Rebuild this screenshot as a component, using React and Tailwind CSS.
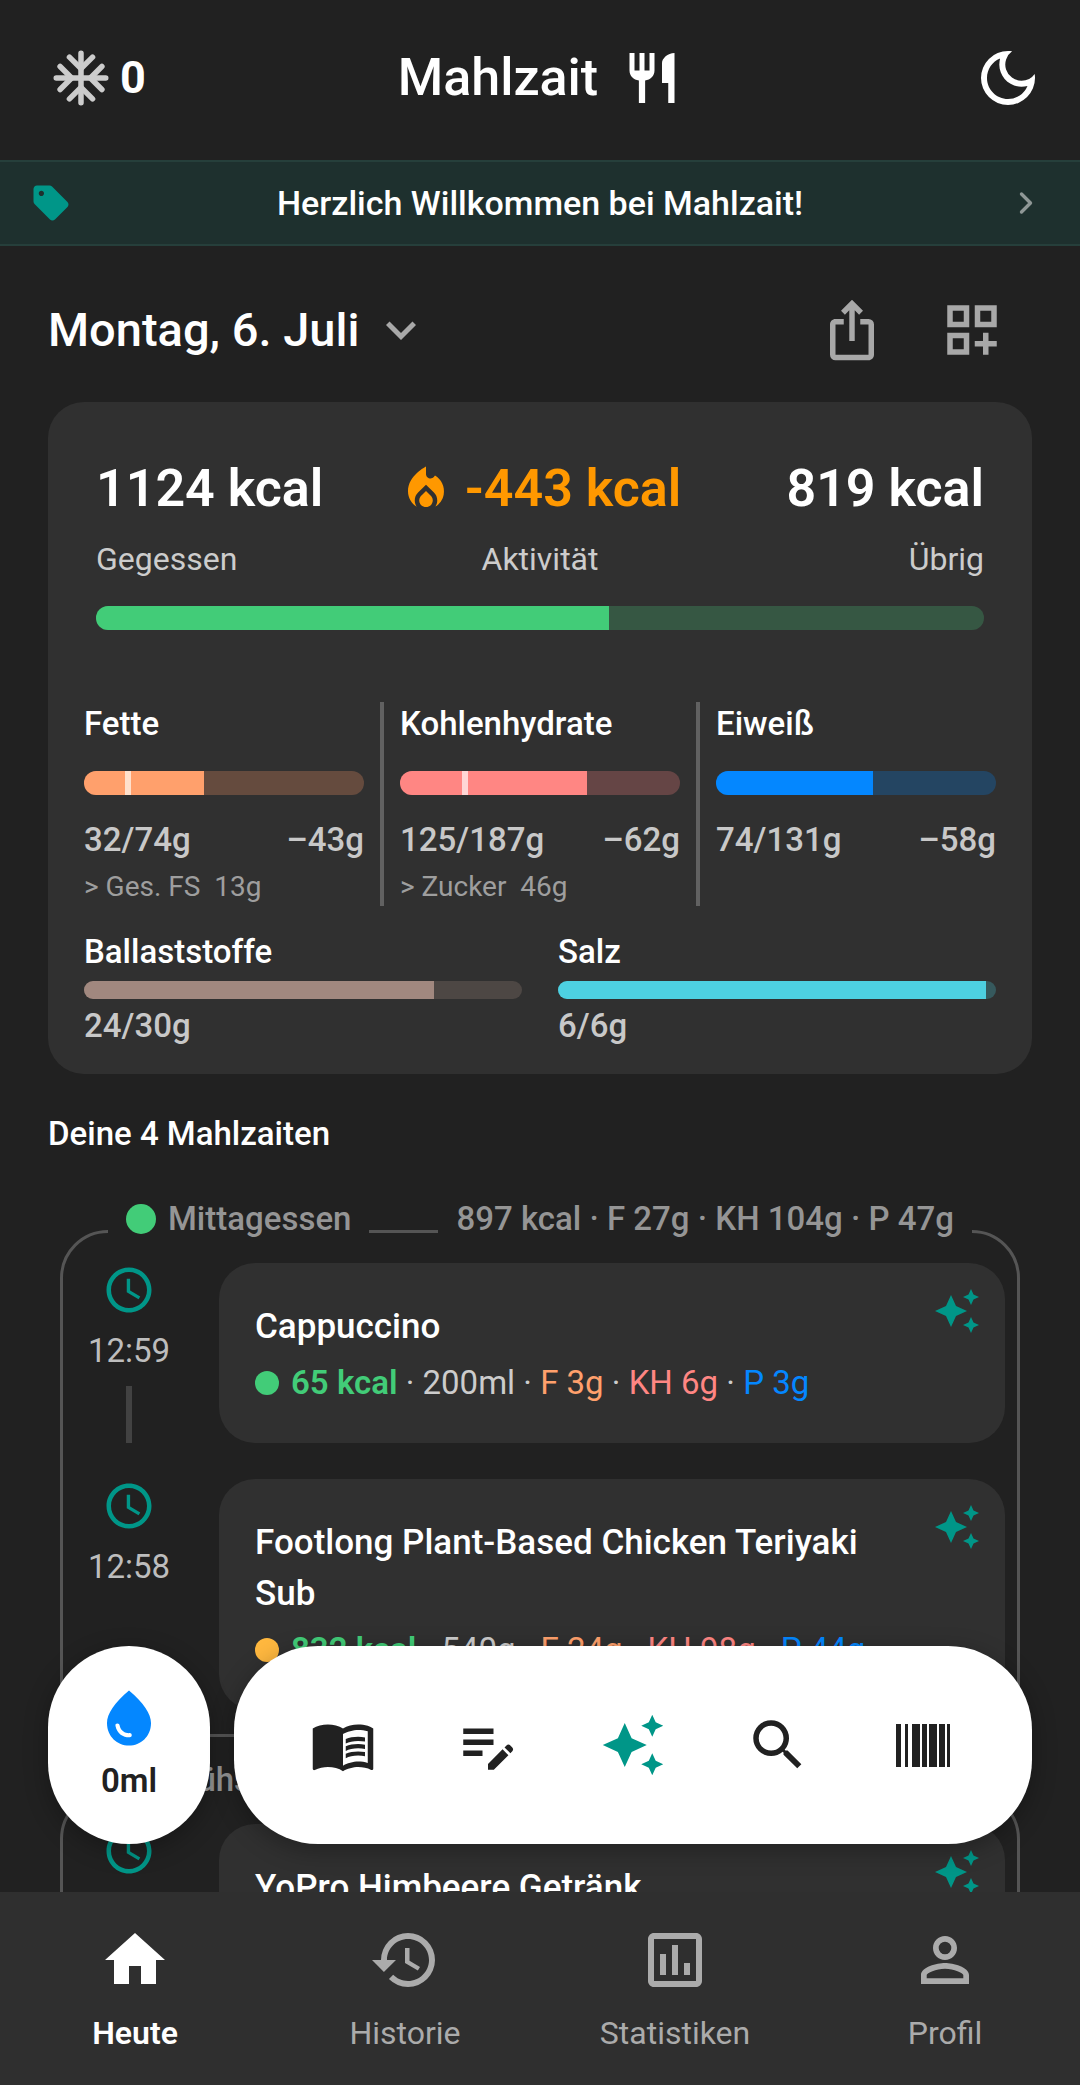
import { useState } from 'react';
import { ChevronRight } from 'lucide-react';
import {
  MdAccessTime,
  MdAutoAwesome,
  MdEditNote,
  MdHistory,
  MdHome,
  MdIosShare,
  MdKeyboardArrowDown,
  MdLocalFireDepartment,
  MdMenuBook,
  MdOutlineDarkMode,
  MdOutlineDashboardCustomize,
  MdOutlineInsertChart,
  MdPersonOutline,
  MdRestaurant,
  MdSearch,
  MdSell,
  MdWaterDrop,
} from 'react-icons/md';

const macros = [
  {
    name: 'Fette',
    value: '32/74g',
    rest: '–43g',
    sub: '> Ges. FS\u00a0 13g',
    percent: 42.7,
    marker: 14.6,
    fill: 'bg-[#ffa06c]',
    track: 'bg-[#654b3e]',
    markerColor: 'bg-[#ffe0cc]',
  },
  {
    name: 'Kohlenhydrate',
    value: '125/187g',
    rest: '–62g',
    sub: '> Zucker\u00a0 46g',
    percent: 66.7,
    marker: 22.3,
    fill: 'bg-[#ff8683]',
    track: 'bg-[#654545]',
    markerColor: 'bg-[#ffd6d5]',
  },
  {
    name: 'Eiweiß',
    value: '74/131g',
    rest: '–58g',
    percent: 56.1,
    fill: 'bg-[#0487ff]',
    track: 'bg-[#244562]',
  },
];

const minerals = [
  { name: 'Ballaststoffe', value: '24/30g', percent: 80, fill: 'bg-[#a1887f]', track: 'bg-[#4d4744]' },
  { name: 'Salz', value: '6/6g', percent: 97.7, fill: 'bg-[#4dd0e1]', track: 'bg-[#36595d]' },
];

const mealGroups = [
  {
    name: 'Mittagessen',
    total: '897 kcal · F 27g · KH 104g · P 47g',
    meals: [
      {
        name: 'Cappuccino',
        time: '12:59',
        dot: 'bg-[#42cc78]',
        kcal: '65 kcal',
        amount: '200ml',
        fat: 'F 3g',
        carbs: 'KH 6g',
        protein: 'P 3g',
      },
      {
        name: 'Footlong Plant-Based Chicken Teriyaki Sub',
        time: '12:58',
        dot: 'bg-[#ffb83f]',
        kcal: '832 kcal',
        amount: '540g',
        fat: 'F 24g',
        carbs: 'KH 98g',
        protein: 'P 44g',
      },
    ],
  },
  {
    name: 'Frühstück',
    meals: [{ name: 'YoPro Himbeere Getränk' }],
  },
];

const tabs = [
  { id: 'heute', label: 'Heute', Icon: MdHome },
  { id: 'historie', label: 'Historie', Icon: MdHistory },
  { id: 'statistiken', label: 'Statistiken', Icon: MdOutlineInsertChart },
  { id: 'profil', label: 'Profil', Icon: MdPersonOutline },
];

const SnowflakeIcon = () => (
  <svg
    viewBox="0 0 24 24"
    className="size-[66px]"
    fill="none"
    stroke="currentColor"
    strokeWidth="2"
    strokeLinecap="round"
    aria-hidden="true"
  >
    <path d="M12 3v18M3 12h18" />
    <path d="M7.8 4.4 12 8.6l4.2-4.2M7.8 19.6 12 15.4l4.2 4.2M4.4 7.8 8.6 12l-4.2 4.2M19.6 7.8 15.4 12l4.2 4.2" />
  </svg>
);

const BarcodeIcon = () => (
  <svg viewBox="0 0 54 43" className="h-[43px] w-[54px]" fill="currentColor" aria-hidden="true">
    <path d="M0 0h5v43H0zM9 0h3v43H9zM16 0h8v43h-8zM26 0h5v43h-5zM33 0h8v43h-8zM43 0h6v43h-6zM51 0h3v43h-3z" />
  </svg>
);

const ProgressBar = ({ percent, fill, track, height = 'h-6', marker, markerColor }) => (
  <div className={`relative overflow-hidden rounded-full ${height} ${track}`}>
    <div className={`h-full ${fill}`} style={{ width: `${percent}%` }} />
    {marker && (
      <div className={`absolute top-0 h-full w-1.5 ${markerColor}`} style={{ left: `${marker}%` }} />
    )}
  </div>
);

const SummaryCard = () => (
  <section className="mx-12 mt-3 rounded-[36px] bg-[#303030] px-9 pt-12 pb-[27px]">
    <div className="px-3">
      <div className="grid grid-cols-[1fr_auto_1fr]">
        <div>
          <p className="text-[52px] leading-[78px] font-semibold">1124 kcal</p>
          <p className="mt-1.5 text-[32px] leading-[50px] text-[#cccccc]">Gegessen</p>
        </div>
        <div className="text-center">
          <p className="flex items-center justify-center gap-3 text-[52px] leading-[78px] font-semibold text-[#ff9800]">
            <MdLocalFireDepartment className="size-[54px]" />
            -443 kcal
          </p>
          <p className="mt-1.5 text-[32px] leading-[50px] text-[#cccccc]">Aktivität</p>
        </div>
        <div className="text-right">
          <p className="text-[52px] leading-[78px] font-semibold">819 kcal</p>
          <p className="mt-1.5 text-[32px] leading-[50px] text-[#cccccc]">Übrig</p>
        </div>
      </div>
      <div className="mt-[22px]">
        <ProgressBar percent={57.8} fill="bg-[#42cc78]" track="bg-[#365743]" />
      </div>
    </div>

    <div className="mt-[72px] flex gap-4">
      {macros.map((macro, index) => (
        <div key={macro.name} className="contents">
          {index > 0 && <div className="w-1 bg-[#616161]" />}
          <div className="min-h-[204px] flex-1">
            <h3 className="text-[33px] leading-[44px] font-medium">{macro.name}</h3>
            <div className="mt-[25px]">
              <ProgressBar {...macro} />
            </div>
            <div className="mt-6 flex justify-between text-[33px] leading-[42px] font-medium text-[#c8c8c8]">
              <span>{macro.value}</span>
              <span>{macro.rest}</span>
            </div>
            {macro.sub && (
              <p className="mt-1.5 text-[28px] leading-[39px] text-[#9e9e9e]">{macro.sub}</p>
            )}
          </div>
        </div>
      ))}
    </div>

    <div className="mt-6 grid grid-cols-2 gap-9">
      {minerals.map((mineral) => (
        <div key={mineral.name}>
          <h3 className="text-[33px] leading-[44px] font-medium">{mineral.name}</h3>
          <div className="mt-[7px] mb-1.5">
            <ProgressBar {...mineral} height="h-[18px]" />
          </div>
          <p className="text-[33px] leading-[42px] font-medium text-[#c8c8c8]">{mineral.value}</p>
        </div>
      ))}
    </div>
  </section>
);

const MealRow = ({ meal, last }) => (
  <li className="flex gap-6">
    <div className="flex w-[132px] flex-col items-center">
      <MdAccessTime className="size-[54px] text-[#009688]" />
      {meal.time && (
        <time className="mt-[9px] text-[33px] leading-[50px] text-[#bdbdbd]">{meal.time}</time>
      )}
      {!last && <div className="mt-2.5 w-1.5 flex-1 bg-[#424242]" />}
    </div>
    <article className="flex flex-1 justify-between gap-3 rounded-[36px] bg-[#303030] pt-6 pr-6 pb-9 pl-9">
      <div className="pt-3.5">
        <h3 className="text-[35px] leading-[51px] font-medium">{meal.name}</h3>
        {meal.kcal && (
          <div className="mt-[7px] flex items-center gap-3 text-[33px] leading-[48px] text-[#cccccc]">
            <span className={`size-6 rounded-full ${meal.dot}`} />
            <p>
              <span className="font-semibold text-[#42cc78]">{meal.kcal}</span> · {meal.amount} ·{' '}
              <span className="text-[#ffa06c]">{meal.fat}</span> ·{' '}
              <span className="text-[#ff8683]">{meal.carbs}</span> ·{' '}
              <span className="text-[#0487ff]">{meal.protein}</span>
            </p>
          </div>
        )}
      </div>
      <MdAutoAwesome className="size-12 shrink-0 text-[#009688]" />
    </article>
  </li>
);

const MealGroup = ({ group }) => (
  <section className="rounded-[48px] border-[3px] border-[#555555] pr-3 pb-6">
    {/* Labels cover the top border of the frame */}
    <header className="-mt-[39px] mr-[33px] ml-[45px] flex justify-between text-[33px] leading-[50px] font-medium text-[#959595]">
      <h2 className="flex items-center gap-3 bg-[#212121] px-[18px]">
        <span className="size-[30px] rounded-full bg-[#42cc78]" />
        {group.name}
      </h2>
      {group.total && <p className="bg-[#212121] px-[18px]">{group.total}</p>}
    </header>
    <ul className="mt-[19px] flex flex-col gap-9">
      {group.meals.map((meal, index) => (
        <MealRow key={meal.name} meal={meal} last={index === group.meals.length - 1} />
      ))}
    </ul>
  </section>
);

const QuickActions = () => (
  <div className="absolute inset-x-12 bottom-12 flex h-[198px] gap-6 text-[#212121]">
    <button
      type="button"
      className="flex w-[162px] flex-col items-center justify-center gap-1.5 rounded-[81px] bg-white shadow-[0_6px_24px_rgba(0,0,0,0.3)]"
    >
      <MdWaterDrop className="size-[66px] text-[#0487ff]" />
      <span className="text-[33px] leading-[48px] font-semibold">0ml</span>
    </button>
    <div className="grid flex-1 grid-cols-5 rounded-[84px] bg-white px-9 shadow-[0_6px_24px_rgba(0,0,0,0.3)]">
      <button type="button" aria-label="Rezepte" className="grid place-items-center">
        <MdMenuBook className="size-[66px]" />
      </button>
      <button type="button" aria-label="Notiz" className="grid place-items-center">
        <MdEditNote className="size-[66px]" />
      </button>
      <button type="button" aria-label="KI" className="grid place-items-center">
        <MdAutoAwesome className="size-[66px] text-[#009688]" />
      </button>
      <button type="button" aria-label="Suche" className="grid place-items-center">
        <MdSearch className="size-[66px]" />
      </button>
      <button type="button" aria-label="Barcode" className="grid place-items-center">
        <BarcodeIcon />
      </button>
    </div>
  </div>
);

const App = () => {
  const [activeTab, setActiveTab] = useState('heute');

  return (
    <div className="flex h-screen flex-col overflow-hidden bg-[#212121] font-['Roboto',sans-serif] text-white">
      <header className="grid h-[160px] shrink-0 grid-cols-[1fr_auto_1fr] items-center px-9 pb-1">
        <button type="button" className="flex items-center gap-1.5 justify-self-start pl-3">
          <span className="text-[#cccccc]">
            <SnowflakeIcon />
          </span>
          <span className="text-[45px] leading-[60px] font-bold">0</span>
        </button>
        <h1 className="flex items-center gap-6 text-[52px] leading-[66px] font-medium">
          Mahlzait
          <MdRestaurant className="size-[60px]" />
        </h1>
        <button type="button" aria-label="Dunkelmodus" className="justify-self-end">
          <MdOutlineDarkMode className="size-[72px]" />
        </button>
      </header>

      <a
        href="#willkommen"
        className="flex h-[86px] shrink-0 items-center justify-between border-y-2 border-[#263f3b] bg-[#1e302e] pr-9 pl-[30px]"
      >
        <MdSell className="size-[42px] text-[#009688]" />
        <span className="text-[34px] leading-[44px] font-medium">Herzlich Willkommen bei Mahlzait!</span>
        <ChevronRight className="size-9 text-[#8f9796]" strokeWidth={2.25} />
      </a>

      <div className="relative min-h-0 flex-1">
        <main className="h-full overflow-y-auto [scrollbar-width:none]">
          <div className="mx-12 mt-6 flex h-[120px] items-center justify-between">
            <button type="button" className="flex items-center gap-3 text-[47px] leading-[60px] font-medium">
              Montag, 6. Juli
              <MdKeyboardArrowDown className="size-[60px] text-[#a8a8a8]" />
            </button>
            <div className="flex text-[#a8a8a8]">
              <button type="button" aria-label="Teilen" className="grid size-[120px] place-items-center">
                <MdIosShare className="size-[66px]" />
              </button>
              <button type="button" aria-label="Anpassen" className="grid size-[120px] place-items-center">
                <MdOutlineDashboardCustomize className="size-[66px]" />
              </button>
            </div>
          </div>

          <SummaryCard />

          <h2 className="mx-12 mt-9 text-[33px] leading-[48px] font-medium">Deine 4 Mahlzaiten</h2>

          <div className="mx-[60px] mt-[72px] flex flex-col gap-[54px]">
            {mealGroups.map((group) => (
              <MealGroup key={group.name} group={group} />
            ))}
          </div>
        </main>

        <QuickActions />
      </div>

      <nav className="grid h-[193px] shrink-0 grid-cols-4 bg-[#2f2f2f]">
        {tabs.map(({ id, label, Icon }) => (
          <a
            key={id}
            href={`#${id}`}
            onClick={() => setActiveTab(id)}
            className={`flex flex-col items-center pt-8 text-[32px] leading-[50px] ${
              activeTab === id ? 'font-semibold text-white' : 'text-[#ababab]'
            }`}
          >
            <Icon className="mb-3 size-[72px]" />
            {label}
          </a>
        ))}
      </nav>
    </div>
  );
};

export default App;
